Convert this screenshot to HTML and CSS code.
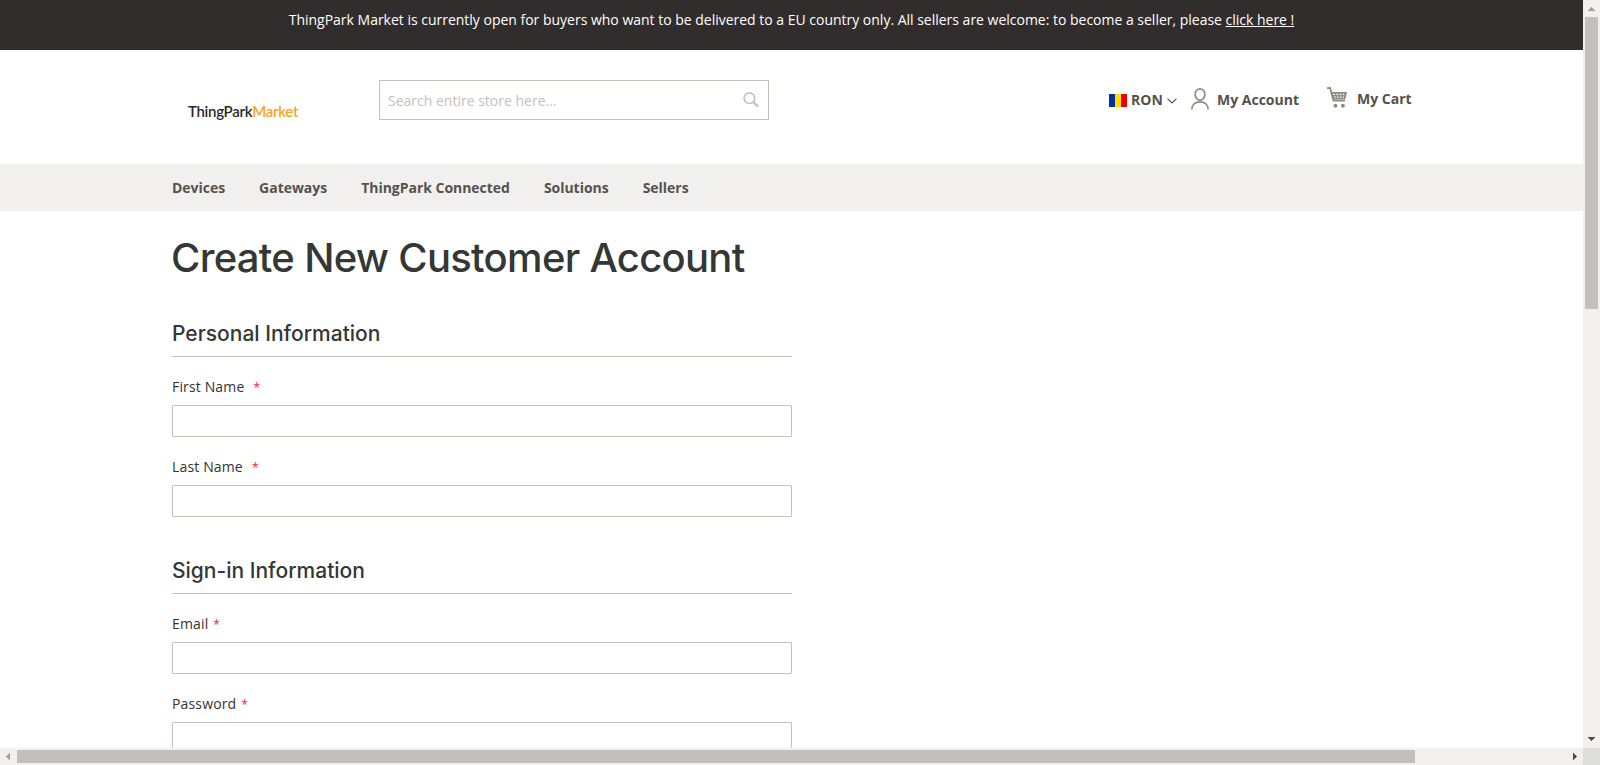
FILE: index.html
```html
<!DOCTYPE html>
<html lang="en">
<head>
<meta charset="utf-8">
<title>Create New Customer Account</title>
<link rel="stylesheet" href="styles.css">
</head>
<body>
<div class="window">
  <div class="page">
    <div class="banner"><span class="banner-text">ThingPark Market is currently open for buyers who want to be delivered to a EU country only. All sellers are welcome: to become a seller, please <a href="#">click here !</a></span></div>
    <header class="header">
      <div class="logo"><span class="logo-dark">ThingPark</span><span class="logo-accent">Market</span></div>
      <div class="search">
        <span class="search-text">Search entire store here...</span>
        <svg class="search-icon" width="16" height="16" viewBox="0 0 16 16" fill="none" stroke="#c2c0bb"><circle cx="6.4" cy="6.2" r="5.3" stroke-width="1.6"/><path d="M10.2 10 15 14.6" stroke-width="2.2"/></svg>
      </div>
      <div class="tools">
        <svg class="flag" width="18" height="13" viewBox="0 0 18 13"><path fill="#00319c" d="M0 0h6v13H0z"/><path fill="#ffde00" d="M6 0h6v13H6z"/><path fill="#f00008" d="M12 0h6v13h-6z"/></svg>
        <span class="tool currency">RON</span>
        <svg class="chevron" width="10" height="6" viewBox="0 0 10 6" fill="none" stroke="#55534e" stroke-width="1.1"><path d="M.5.6 5 5 9.500.6"/></svg>
        <svg class="person" width="18" height="22" viewBox="0 0 18 22" fill="none" stroke="#8f8b84" stroke-width="1.7"><ellipse cx="9" cy="6.500" rx="4.900" ry="5.600"/><path d="M.9 21.500c0-4.600 3.200-7.700 8.100-7.700s8.100 3.100 8.100 7.700"/></svg>
        <span class="tool account">My Account</span>
        <svg class="cart" width="20" height="21" viewBox="0 0 20 21"><path d="M0 1.200 3.100.9 6.500 13.700h11.500" fill="none" stroke="#8f8b84" stroke-width="1.800"/><path fill="#8f8b84" d="M4.200 4.900H20l-1.700 7.600H6.300z"/><path d="M6.200 7.400h1.700m1.500 0h1.700m1.500 0h1.700m1.500 0h1.500M7.200 10.200h1.500m1.500 0h1.500m1.500 0h1.500m1.300 0h1" stroke="#fff" stroke-width="1.200"/><circle cx="8.400" cy="18.800" r="2" fill="#8f8b84"/><circle cx="15.900" cy="18.800" r="2" fill="#8f8b84"/></svg>
        <span class="tool my-cart">My Cart</span>
      </div>
    </header>
    <nav class="nav"><a>Devices</a><a>Gateways</a><a>ThingPark Connected</a><a>Solutions</a><a>Sellers</a></nav>
    <main class="main">
      <h1 class="title">Create New Customer Account</h1>
      <section class="group">
        <h2 class="legend">Personal Information</h2>
        <div class="field"><label class="label wide">First Name<i>*</i></label><div class="input"></div></div>
        <div class="field"><label class="label wide">Last Name<i>*</i></label><div class="input"></div></div>
      </section>
      <section class="group">
        <h2 class="legend">Sign-in Information</h2>
        <div class="field"><label class="label">Email<i>*</i></label><div class="input"></div></div>
        <div class="field"><label class="label">Password<i>*</i></label><div class="input"></div></div>
      </section>
    </main>
  </div>
  <div class="vbar">
    <svg width="17" height="17" viewBox="0 0 17 17" shape-rendering="crispEdges"><path fill="#a3a099" d="M8 7h1v1h1v1h1v1h1v1H5v-1h1V9h1V8h1z"/></svg>
    <div class="vthumb"></div>
    <svg class="arrow-end" width="17" height="17" viewBox="0 0 17 17" shape-rendering="crispEdges"><path fill="#4d4d4b" d="M5 6h7v1h-1v1h-1v1H9v1H8V9H7V8H6V7H5z"/></svg>
  </div>
  <div class="hbar">
    <svg width="17" height="17" viewBox="0 0 17 17" shape-rendering="crispEdges"><path fill="#a3a099" d="M10 5v7H9v-1H8v-1H7V9H6V8h1V7h1V6h1V5z"/></svg>
    <div class="hthumb"></div>
    <svg class="arrow-end" width="17" height="17" viewBox="0 0 17 17" shape-rendering="crispEdges"><path fill="#4d4d4b" d="M7 5h1v1h1v1h1v1h1v1h-1v1H9v1H8v1H7z"/></svg>
  </div>
  <div class="corner"></div>
</div>
</body>
</html>
```
FILE: styles.css
```css
* { box-sizing: border-box; }
body { margin: 0; background: #fff; font: 14px/20px "Open Sans", "Noto Sans", sans-serif; color: #333; }
.window { display: grid; grid-template: 748px 17px / 1583px 17px; width: 1600px; height: 765px; overflow: hidden; }
.page { overflow: hidden; }
.banner { height: 50px; padding-top: 10px; background: #312d2c; color: #fff; text-align: center; white-space: nowrap; }
.banner-text { letter-spacing: -0.01px; }
.banner a { color: #fff; text-decoration: underline; }
.header { display: flex; height: 114px; padding-left: 188px; }
.logo { width: 191px; padding-top: 51px; font: 600 15px/20px Lato, sans-serif; letter-spacing: -0.3px; white-space: nowrap; }
.logo-dark { color: #2b2a26; }
.logo-accent { color: #fca120; }
.search { display: flex; align-items: center; justify-content: space-between; width: 390px; height: 40px; margin-top: 30px; padding: 0 9px 0 8px; border: 1px solid #c5c2ba; color: #c4c1bc; }
.search-text { padding-top: 1px; }
.tools { display: flex; align-items: flex-start; margin-left: 340px; color: #55524d; font-weight: 700; white-space: nowrap; }
.flag { margin-top: 44px; }
.tool { margin-top: 40px; }
.currency { width: 36px; padding-left: 4px; }
.chevron { margin: 48px 0 0 4px; }
.person { margin: 38px 0 0 14px; }
.account { width: 118px; padding-left: 8px; }
.cart { margin-top: 37px; }
.my-cart { margin-top: 39px; padding-left: 10px; }
.nav { display: flex; gap: 34px; height: 47px; padding: 14px 0 0 172px; background: #f1f0ee; color: #55524d; font-weight: 700; letter-spacing: -0.03px; }
.main { width: 792px; padding-left: 172px; }
.title { margin: 0 0 0 -1px; padding-top: 22px; height: 95px; font: 500 40px/50px Inter, sans-serif; letter-spacing: -0.7px; color: #333735; white-space: nowrap; }
.group { margin-bottom: 6px; }
.legend { height: 51px; margin: 0 0 20px; padding-top: 13px; border-bottom: 1px solid #c5c2ba; font: 500 21px/30px Inter, sans-serif; color: #333735; }
.field { height: 80px; }
.label { display: block; height: 28px; font-weight: 500; line-height: 20px; letter-spacing: 0.15px; }
.label i { margin-left: 5px; color: #ff1a1e; font-size: 12px; font-style: normal; }
.wide i { margin-left: 9px; }
.input { height: 32px; border: 1px solid #c5c2ba; border-radius: 1px; background: #fff; }
.vbar { display: flex; flex-direction: column; background: #f1f0ef; }
.vthumb { width: 13px; height: 292px; margin-left: 2px; background: #c1c0be; }
.vbar .arrow-end { margin-top: auto; }
.hbar { display: flex; background: #f1f0ef; }
.hthumb { width: 1398px; height: 13px; margin-top: 2px; background: #c1c0be; }
.hbar .arrow-end { margin-left: auto; }
.corner { background: #dededa; }
```
